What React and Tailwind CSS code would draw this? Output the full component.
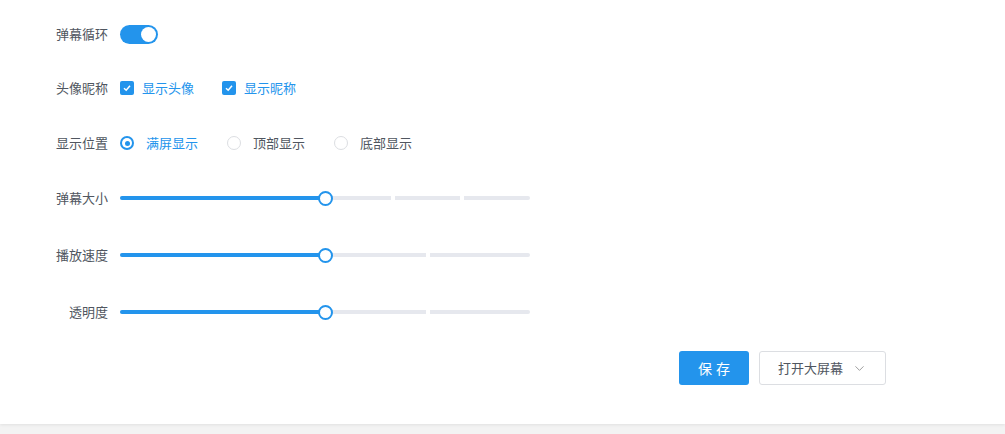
import React, { useState } from "react";
import { ChevronDown } from "lucide-react";

const BLUE = "bg-[#2394ec]";

const Label = ({ children }) => (
  <div className="w-[68px] text-right text-[13px] text-[#505660] mr-3 shrink-0">
    {children}
  </div>
);

const Checkbox = ({ checked, label }) => (
  <div className="flex items-center mr-[28px]">
    <span
      className={
        "w-[14px] h-[14px] rounded-[2px] flex items-center justify-center " +
        (checked ? "bg-[#2394ec]" : "border border-[#dcdee2] bg-white")
      }
    >
      {checked && (
        <svg width="10" height="10" viewBox="0 0 10 10">
          <path d="M2 5.2 L4.2 7.2 L8 2.8" fill="none" stroke="white" strokeWidth="1.5" />
        </svg>
      )}
    </span>
    <span className={"ml-[8px] text-[13px] " + (checked ? "text-[#2394ec]" : "text-[#505660]")}>
      {label}
    </span>
  </div>
);

const Radio = ({ checked, label }) => (
  <div className="flex items-center mr-[29px]">
    <span
      className={
        "w-[14px] h-[14px] rounded-full flex items-center justify-center " +
        (checked ? "bg-[#2394ec]" : "border border-[#dcdee2] bg-white")
      }
    >
      {checked && (
        <span className="w-[10px] h-[10px] rounded-full bg-white flex items-center justify-center">
          <span className="w-[5px] h-[5px] rounded-full bg-[#2394ec]" />
        </span>
      )}
    </span>
    <span className={"ml-[12px] text-[13px] " + (checked ? "text-[#2394ec]" : "text-[#505660]")}>
      {label}
    </span>
  </div>
);

const Slider = ({ value, stops }) => (
  <div className="relative w-[410px] h-[14px] flex items-center">
    <div className="w-full h-[4px] rounded-[2px] bg-[#e6e8ee] relative overflow-hidden">
      {stops
        .filter((s) => s > value)
        .map((s) => (
          <div
            key={s}
            className="absolute top-0 h-full w-[4px] bg-white"
            style={{ left: `calc(${s * 100}% - 2px)` }}
          />
        ))}
      <div className={"absolute left-0 top-0 h-full " + BLUE} style={{ width: value * 100 + "%" }} />
    </div>
    <div
      className="absolute top-0 w-[15px] h-[15px] rounded-full bg-white border-2 border-[#2394ec]"
      style={{ left: `calc(${value * 100}% - 7px)` }}
    />
  </div>
);

const Row = ({ label, children, className }) => (
  <div className={"flex items-center h-[20px] " + className}>
    <Label>{label}</Label>
    {children}
  </div>
);

export default function App() {
  const [loop, setLoop] = useState(true);
  return (
    <div
      className="min-h-[434px] bg-[#f3f3f3]"
      style={{ fontFamily: '"Noto Sans CJK SC", "Noto Sans", sans-serif' }}
    >
      <div className="bg-white h-[424px] shadow-[0_1px_3px_rgba(0,0,0,0.08)] pl-[40px] pt-[24px]">
        <Row label="弹幕循环">
          <button
            onClick={() => setLoop(!loop)}
            className={
              "w-[38px] h-[19px] rounded-full flex items-center px-[2px] " +
              (loop ? "bg-[#2394ec] justify-end" : "bg-[#ccc] justify-start")
            }
          >
            <span className="w-[15px] h-[15px] rounded-full bg-white" />
          </button>
        </Row>
        <Row label="头像昵称" className="mt-[34px]">
          <Checkbox checked label="显示头像" />
          <Checkbox checked label="显示昵称" />
        </Row>
        <Row label="显示位置" className="mt-[35px]">
          <Radio checked label="满屏显示" />
          <Radio label="顶部显示" />
          <Radio label="底部显示" />
        </Row>
        <Row label="弹幕大小" className="mt-[35px]">
          <Slider value={0.5} stops={[1 / 6, 2 / 6, 4 / 6, 5 / 6]} />
        </Row>
        <Row label="播放速度" className="mt-[37px]">
          <Slider value={0.5} stops={[0.25, 0.75]} />
        </Row>
        <Row label="透明度" className="mt-[37px]">
          <Slider value={0.5} stops={[0.25, 0.75]} />
        </Row>
        <div className="flex justify-end w-[846px] mt-[29px]">
          <button className="w-[70px] h-[34px] rounded-[3px] bg-[#2394ec] text-white text-[14px] tracking-[4px] pl-[4px]">
            保存
          </button>
          <button className="ml-[10px] w-[127px] h-[34px] rounded-[3px] border border-[#dcdee2] bg-white text-[#505660] text-[13px] flex items-center justify-center">
            打开大屏幕
            <ChevronDown size={15} strokeWidth={1.3} className="ml-[9px] text-[#888]" />
          </button>
        </div>
      </div>
    </div>
  );
}
